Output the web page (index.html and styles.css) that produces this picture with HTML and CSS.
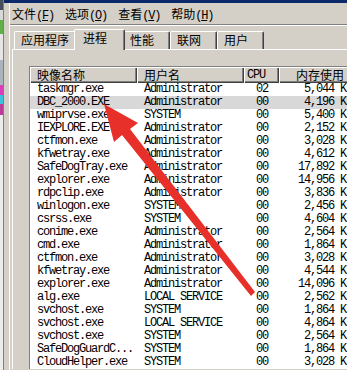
FILE: index.html
```html
<!DOCTYPE html>
<html lang="zh-CN">
<head>
  <meta charset="UTF-8">
  <meta name="viewport" content="width=device-width, initial-scale=1.0">
  <title>Windows 任务管理器</title>
  <link rel="stylesheet" href="styles.css">
</head>
<body>
  <div class="screen">
    <div class="desk"></div>
    <div class="win">
      <div class="titlebar"></div>
      <div class="frame">
        <div class="menubar">
          <span class="menu">文件<span class="key">(<u>F</u>)</span></span>
          <span class="menu">选项<span class="key">(<u>O</u>)</span></span>
          <span class="menu">查看<span class="key">(<u>V</u>)</span></span>
          <span class="menu">帮助<span class="key">(<u>H</u>)</span></span>
        </div>
        <div class="tabs">
          <div class="tab first">应用程序</div>
          <div class="tab active">进程</div>
          <div class="tab">性能</div>
          <div class="tab">联网</div>
          <div class="tab">用户</div>
        </div>
        <div class="panel">
          <div class="list">
            <div class="row head">
              <span>映像名称</span>
              <span>用户名</span>
              <span class="cpu">CPU</span>
              <span class="mem">内存使用</span>
            </div>
            <div class="row"><span>taskmgr.exe</span><span>Administrator</span><span class="cpu">02</span><span class="mem">5,044 K</span></div>
            <div class="row sel"><span>DBC_2000.EXE</span><span>Administrator</span><span class="cpu">00</span><span class="mem">4,196 K</span></div>
            <div class="row"><span>wmiprvse.exe</span><span>SYSTEM</span><span class="cpu">00</span><span class="mem">5,400 K</span></div>
            <div class="row"><span>IEXPLORE.EXE</span><span>Administrator</span><span class="cpu">00</span><span class="mem">2,152 K</span></div>
            <div class="row"><span>ctfmon.exe</span><span>Administrator</span><span class="cpu">00</span><span class="mem">3,028 K</span></div>
            <div class="row"><span>kfwetray.exe</span><span>Administrator</span><span class="cpu">00</span><span class="mem">4,612 K</span></div>
            <div class="row"><span>SafeDogTray.exe</span><span>Administrator</span><span class="cpu">00</span><span class="mem">17,892 K</span></div>
            <div class="row"><span>explorer.exe</span><span>Administrator</span><span class="cpu">00</span><span class="mem">14,956 K</span></div>
            <div class="row"><span>rdpclip.exe</span><span>Administrator</span><span class="cpu">00</span><span class="mem">3,836 K</span></div>
            <div class="row"><span>winlogon.exe</span><span>SYSTEM</span><span class="cpu">00</span><span class="mem">2,456 K</span></div>
            <div class="row"><span>csrss.exe</span><span>SYSTEM</span><span class="cpu">00</span><span class="mem">4,604 K</span></div>
            <div class="row"><span>conime.exe</span><span>Administrator</span><span class="cpu">00</span><span class="mem">2,564 K</span></div>
            <div class="row"><span>cmd.exe</span><span>Administrator</span><span class="cpu">00</span><span class="mem">1,864 K</span></div>
            <div class="row"><span>ctfmon.exe</span><span>Administrator</span><span class="cpu">00</span><span class="mem">3,028 K</span></div>
            <div class="row"><span>kfwetray.exe</span><span>Administrator</span><span class="cpu">00</span><span class="mem">4,544 K</span></div>
            <div class="row"><span>explorer.exe</span><span>Administrator</span><span class="cpu">00</span><span class="mem">14,096 K</span></div>
            <div class="row"><span>alg.exe</span><span>LOCAL SERVICE</span><span class="cpu">00</span><span class="mem">2,562 K</span></div>
            <div class="row"><span>svchost.exe</span><span>SYSTEM</span><span class="cpu">00</span><span class="mem">1,864 K</span></div>
            <div class="row"><span>svchost.exe</span><span>LOCAL SERVICE</span><span class="cpu">00</span><span class="mem">4,864 K</span></div>
            <div class="row"><span>svchost.exe</span><span>SYSTEM</span><span class="cpu">00</span><span class="mem">2,564 K</span></div>
            <div class="row"><span>SafeDogGuardC...</span><span>SYSTEM</span><span class="cpu">00</span><span class="mem">1,864 K</span></div>
            <div class="row"><span>CloudHelper.exe</span><span>SYSTEM</span><span class="cpu">00</span><span class="mem">3,028 K</span></div>
          </div>
        </div>
      </div>
    </div>
  </div>

  <!-- 红色箭头标注 -->
  <svg class="arrow" width="347" height="370" viewBox="0 0 347 370">
    <polygon points="104,104 138,123 130,129 255,292 251,296 122,135 114,142" fill="#e8302a"/>
  </svg>
</body>
</html>
```

FILE: styles.css
```css
* {
  box-sizing: border-box;
}
html, body {
  margin: 0;
}
body {
  position: relative;
  width: 347px;
  height: 370px;
  overflow: hidden;
  background-color: #d4d0c8;
  color: #000;
  font-family: "Noto Sans CJK SC", sans-serif;
  font-size: 12px;
}
.screen {
  display: flex;
  height: 370px;
}
.desk {
  flex: none;
  width: 3px;
  background: linear-gradient(#44505e 0, #44505e 10px, #d8d8d8 10px, #d8d8d8 20px, #5fb048 20px, #5fb048 34px,
    #e6e6e6 34px, #e6e6e6 60px, #aab4bc 60px, #aab4bc 85px, #d840b8 85px, #d840b8 95px, #40c0e0 95px,
    #40c0e0 104px, #b83c98 104px, #b83c98 115px, #ececec 115px);
}
.win {
  flex: 1;
  min-width: 0;
  display: flex;
  flex-direction: column;
  border-left: 1px solid #808080;
  overflow: hidden;
}
.titlebar {
  height: 3px;
  background-color: #0c2a6a;
}
.frame {
  flex: 1;
  margin-left: 5px;
  border-left: 1px solid #fff;
}
.menubar {
  display: flex;
  align-items: center;
  gap: 11px;
  height: 22px;
  padding-left: 2px;
  border-bottom: 1px solid #808080;
  box-shadow: 0 1px #fff;
}
.key {
  font-family: "Liberation Mono", monospace;
  letter-spacing: -1.2px;
}
.tabs {
  display: flex;
  align-items: flex-end;
  height: 24px;
  padding-left: 4px;
}
.tab {
  position: relative;
  min-width: 47px;
  height: 18px;
  padding: 0 6px;
  line-height: 16px;
  border: 1px solid;
  border-color: #fff #404040 transparent #fff;
  border-bottom: none;
  border-radius: 2px 2px 0 0;
  box-shadow: inset -1px 0 #808080;
}
.tab.active {
  z-index: 1;
  height: 21px;
  min-width: 51px;
  margin: 0 -2px -1px;
  padding: 0 8px;
  line-height: 16px;
  background-color: #d4d0c8;
}
.panel {
  margin-left: 2px;
  padding: 16px 0 0 16px;
  border-top: 1px solid #fff;
  border-left: 1px solid #fff;
}
.list {
  width: 340px;
  background-color: #fff;
  border-top: 1px solid #808080;
  border-left: 1px solid #808080;
}
.row {
  display: grid;
  grid-template-columns: 107px 107px 35px 73px;
  height: 13px;
  line-height: 13px;
  font-family: "Liberation Mono", "Noto Sans CJK SC", monospace;
  letter-spacing: -1.2px;
  white-space: nowrap;
}
.row span {
  padding-left: 7px;
  overflow: hidden;
}
.row .cpu {
  padding-left: 12px;
}
.row .mem {
  padding-left: 0;
  padding-right: 6px;
  text-align: right;
}
.row.sel {
  background-color: #d8d8d8;
}
.row.head {
  height: 16px;
  line-height: 16px;
  font-family: "Noto Sans CJK SC", sans-serif;
  letter-spacing: 0;
}
.row.head span {
  background-color: #d4d0c8;
  box-shadow: inset 1px 1px #fff, inset -1px -1px #404040, inset -2px -2px #808080;
}
.row.head .cpu {
  padding-left: 3px;
  font-family: "Liberation Mono", monospace;
  letter-spacing: -1.2px;
}
.row.head .mem {
  padding-left: 17px;
  text-align: left;
}
.arrow {
  position: absolute;
  top: 0;
  left: 0;
  pointer-events: none;
}
```
